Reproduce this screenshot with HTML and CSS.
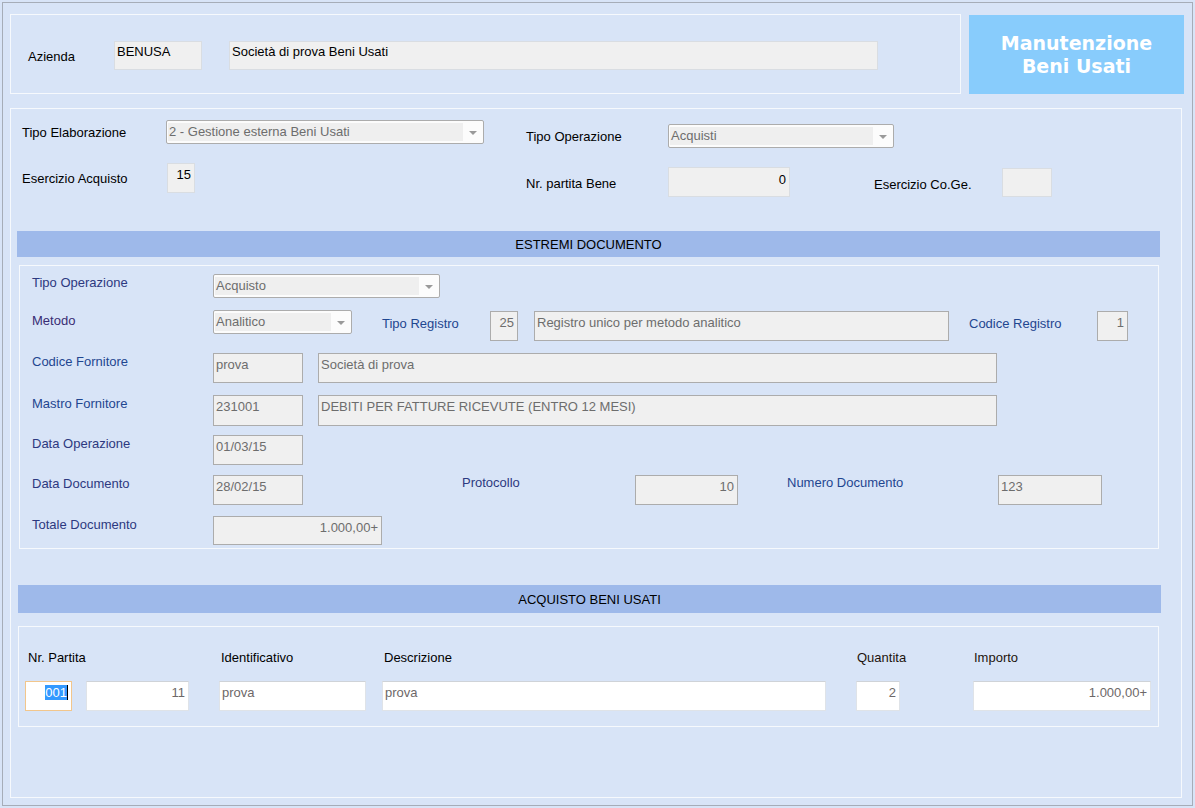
FILE: index.html
```html
<!DOCTYPE html>
<html lang="it">
<head>
<meta charset="utf-8">
<title>Manutenzione Beni Usati</title>
<link rel="stylesheet" href="styles.css">
</head>
<body>
<div class="window">
  <div class="top">
    <div class="panel az">
      <span class="lbl az-lbl">Azienda</span>
      <div class="fld light az-f1">BENUSA</div>
      <div class="fld light az-f2">Società di prova Beni Usati</div>
    </div>
    <div class="title">Manutenzione<br>Beni Usati</div>
  </div>

  <div class="panel main">
    <div class="gen">
      <div class="gen-left">
        <div class="pair">
          <span class="lbl w144">Tipo Elaborazione</span>
          <div class="combo c-elab"><div class="combo-val">2 - Gestione esterna Beni Usati</div><div class="combo-arrow"><span class="tri"></span></div></div>
        </div>
        <div class="pair row-gap">
          <span class="lbl w144">Esercizio Acquisto</span>
          <div class="fld light dark num f-eserc">15</div>
        </div>
      </div>
      <div class="gen-right">
        <div class="pair">
          <span class="lbl w142">Tipo Operazione</span>
          <div class="combo c-oper"><div class="combo-val">Acquisti</div><div class="combo-arrow"><span class="tri"></span></div></div>
        </div>
        <div class="pair row-gap">
          <span class="lbl w142 lbl-low">Nr. partita Bene</span>
          <div class="fld light dark num f-partita">0</div>
          <span class="lbl lbl-coge lbl-low">Esercizio Co.Ge.</span>
          <div class="fld light f-coge"></div>
        </div>
      </div>
    </div>

    <div class="band band-est">ESTREMI DOCUMENTO</div>

    <div class="panel est">
      <div class="erow">
        <span class="lbl elbl c-navy">Tipo Operazione</span>
        <div class="combo c-tipo"><div class="combo-val">Acquisto</div><div class="combo-arrow"><span class="tri"></span></div></div>
      </div>
      <div class="erow r2">
        <span class="lbl elbl c-purple lbl-metodo">Metodo</span>
        <div class="combo c-metodo"><div class="combo-val">Analitico</div><div class="combo-arrow"><span class="tri"></span></div></div>
        <span class="lbl c-blue lbl-reg lbl-treg">Tipo Registro</span>
        <div class="fld num f-treg">25</div>
        <div class="fld f-regdesc">Registro unico per metodo analitico</div>
        <span class="lbl c-blue lbl-reg lbl-creg">Codice Registro</span>
        <div class="fld num f-creg">1</div>
      </div>
      <div class="erow r3">
        <span class="lbl elbl c-blue">Codice Fornitore</span>
        <div class="fld f-code">prova</div>
        <div class="fld f-desc">Società di prova</div>
      </div>
      <div class="erow r4">
        <span class="lbl elbl c-blue">Mastro Fornitore</span>
        <div class="fld f-code tall">231001</div>
        <div class="fld f-desc tall">DEBITI PER FATTURE RICEVUTE (ENTRO 12 MESI)</div>
      </div>
      <div class="erow r5">
        <span class="lbl elbl c-navy">Data Operazione</span>
        <div class="fld f-code">01/03/15</div>
      </div>
      <div class="erow r6">
        <span class="lbl elbl c-navy">Data Documento</span>
        <div class="fld f-code">28/02/15</div>
        <span class="lbl c-navy lbl-prot">Protocollo</span>
        <div class="fld num f-prot">10</div>
        <span class="lbl c-blue lbl-numdoc">Numero Documento</span>
        <div class="fld f-numdoc">123</div>
      </div>
      <div class="erow r7">
        <span class="lbl elbl c-navy">Totale Documento</span>
        <div class="fld num f-tot">1.000,00+</div>
      </div>
    </div>

    <div class="band band-acq">ACQUISTO BENI USATI</div>

    <div class="panel acq">
      <div class="acol col1">
        <span class="lbl alb alb-first">Nr. Partita</span>
        <div class="afields">
          <div class="wfld num focus f-nr"><span class="sel">001</span><span class="caret"></span></div>
          <div class="wfld num f-nr2">11</div>
        </div>
      </div>
      <div class="acol col2">
        <span class="lbl alb">Identificativo</span>
        <div class="wfld">prova</div>
      </div>
      <div class="acol col3">
        <span class="lbl alb">Descrizione</span>
        <div class="wfld">prova</div>
      </div>
      <div class="acol col4">
        <span class="lbl alb alb-brown">Quantita</span>
        <div class="wfld num">2</div>
      </div>
      <div class="acol col5">
        <span class="lbl alb alb-brown">Importo</span>
        <div class="wfld num">1.000,00+</div>
      </div>
    </div>
  </div>
</div>
</body>
</html>
```

FILE: styles.css
```css
* { box-sizing: border-box; }

html, body {
  margin: 0;
  padding: 0;
  background: #d8e4f7;
}

body {
  padding: 2px;
  font-family: "Liberation Sans", Arial, sans-serif;
  font-size: 13px;
  line-height: 15px;
  color: #000;
}

.window {
  width: 1191px;
  height: 804px;
  border: 1px solid #a6adb8;
  background: #d8e4f7;
  padding: 11px 0 0 7px;
}

.panel {
  border: 1px solid #f6f9fd;
}

/* ---------- top row ---------- */
.top {
  display: flex;
  align-items: flex-start;
}

.az {
  width: 951px;
  height: 80px;
  display: flex;
  align-items: center;
  align-self: flex-start;
  padding: 26px 0 0 17px;
  align-items: flex-start;
}

.az-lbl {
  width: 86px;
  padding-top: 8px;
}

.fld {
  height: 30px;
  background: #f0f0f0;
  border: 1px solid #acacac;
  padding: 3px 2px 0 2px;
  color: #6d6d6d;
  white-space: nowrap;
  overflow: hidden;
}

.fld.light {
  border-color: #d9dde2;
  color: #000;
}

.fld.num, .wfld.num {
  text-align: right;
  padding-right: 3px;
}

.az-f1 { width: 88px; height: 29px; padding-top: 2px; }
.az-f2 { width: 649px; height: 29px; margin-left: 27px; padding-top: 2px; }

.title {
  width: 215px;
  height: 79px;
  margin: 1px 0 0 8px;
  background: #88ccfc;
  color: #fff;
  font-family: "DejaVu Sans", Verdana, sans-serif;
  font-weight: bold;
  font-size: 19px;
  line-height: 23px;
  text-align: center;
  display: flex;
  align-items: center;
  justify-content: center;
}

/* ---------- main panel ---------- */
.main {
  width: 1172px;
  height: 690px;
  margin-top: 14px;
}

.gen {
  display: flex;
  align-items: flex-start;
  padding: 11px 0 0 11px;
}

.gen-left { width: 504px; }
.gen-right { margin-top: 4px; }

.pair {
  display: flex;
  align-items: center;
}

.row-gap { margin-top: 19px; }

.lbl { white-space: nowrap; }
.w144 { width: 144px; }
.w142 { width: 142px; }
.lbl-low { padding-top: 3px; }

.lbl-coge { width: 128px; margin-left: 84px; padding-top: 5px; }

.f-eserc { width: 28px; height: 30px; margin-left: 1px; }
.f-partita { width: 122px; height: 30px; padding-top: 4px; }
.f-coge { width: 50px; height: 29px; }

/* combo boxes */
.combo {
  height: 24px;
  border: 1px solid #acacac;
  border-radius: 2px;
  background: #fcfcfc;
  padding: 2px 0 2px 1px;
  display: flex;
  color: #6d6d6d;
}

.combo-val {
  flex: 1;
  background: #efefef;
  padding: 1px 1px 0 1px;
  white-space: nowrap;
  overflow: hidden;
}

.combo-arrow {
  width: 20px;
  display: flex;
  align-items: center;
  justify-content: center;
}

.tri {
  width: 0;
  height: 0;
  border-left: 4px solid transparent;
  border-right: 4px solid transparent;
  border-top: 4px solid #9a9a9a;
  margin-top: 1px;
}

.c-elab { width: 318px; }
.c-oper { width: 226px; }
.c-tipo { width: 227px; }
.c-metodo { width: 139px; }

/* bands */
.band {
  background: #9eb9ea;
  text-align: center;
  display: flex;
  align-items: center;
  justify-content: center;
}

.band-est {
  width: 1143px;
  height: 26px;
  margin: 34px 0 0 6px;
  padding-top: 1px;
}

.band-acq {
  width: 1143px;
  height: 28px;
  margin: 36px 0 0 7px;
}

/* estremi documento */
.est {
  width: 1140px;
  height: 284px;
  margin: 8px 0 0 8px;
  padding: 8px 0 0 12px;
}

.erow {
  display: flex;
  align-items: flex-start;
}

.elbl {
  width: 181px;
  padding-top: 1px;
}

.c-navy { color: #2d3980; }
.c-purple { color: #382c74; }
.c-blue { color: #1f4690; }

.r2 { margin-top: 12px; }
.r3 { margin-top: 12px; }
.r4 { margin-top: 12px; }
.r5 { margin-top: 9px; }
.r6 { margin-top: 10px; }
.r7 { margin-top: 11px; }

.lbl-metodo { padding-top: 3px; }

.lbl-reg { padding-top: 6px; }
.lbl-treg { width: 108px; margin-left: 30px; }
.lbl-creg { width: 128px; margin-left: 20px; }

.f-treg { width: 28px; margin-top: 1px; }
.f-regdesc { width: 415px; margin: 1px 0 0 16px; }
.f-creg { width: 31px; margin-top: 1px; }

.f-code { width: 90px; }
.f-desc { width: 679px; margin-left: 15px; }
.tall { height: 31px; }

.lbl-prot { width: 173px; margin-left: 159px; }
.f-prot { width: 103px; }
.lbl-numdoc { width: 211px; margin-left: 49px; }
.f-numdoc { width: 104px; }

.f-tot { width: 169px; height: 29px; }

/* acquisto beni usati */
.acq {
  width: 1141px;
  height: 101px;
  margin: 13px 0 0 7px;
  padding: 23px 0 0 6px;
  display: flex;
  align-items: flex-start;
}

.acol {
  display: flex;
  flex-direction: column;
}

.alb {
  padding-left: 2px;
  margin-bottom: 16px;
}

.alb-first { padding-left: 3px; }
.alb-brown { padding-left: 1px; color: #1e140e; }

.col1 { width: 164px; }
.col2 { width: 147px; margin-left: 30px; }
.col3 { width: 444px; margin-left: 16px; }
.col4 { width: 44px; margin-left: 30px; }
.col5 { width: 178px; margin-left: 73px; }

.afields {
  display: flex;
}

.wfld {
  height: 30px;
  background: #fff;
  border: 1px solid #dfe3e8;
  border-top-color: #cfd3d8;
  padding: 3px 2px 0 2px;
  color: #6d6868;
  white-space: nowrap;
  overflow: hidden;
}

.f-nr {
  width: 47px;
  border-color: #f2c68c;
  display: flex;
  justify-content: flex-end;
  align-items: flex-start;
  padding-right: 3px;
}

.sel {
  background: #3399ff;
  color: #fff;
}

.caret {
  width: 1px;
  height: 15px;
  background: #000;
}

.f-nr2 {
  width: 103px;
  margin-left: 14px;
}
```
